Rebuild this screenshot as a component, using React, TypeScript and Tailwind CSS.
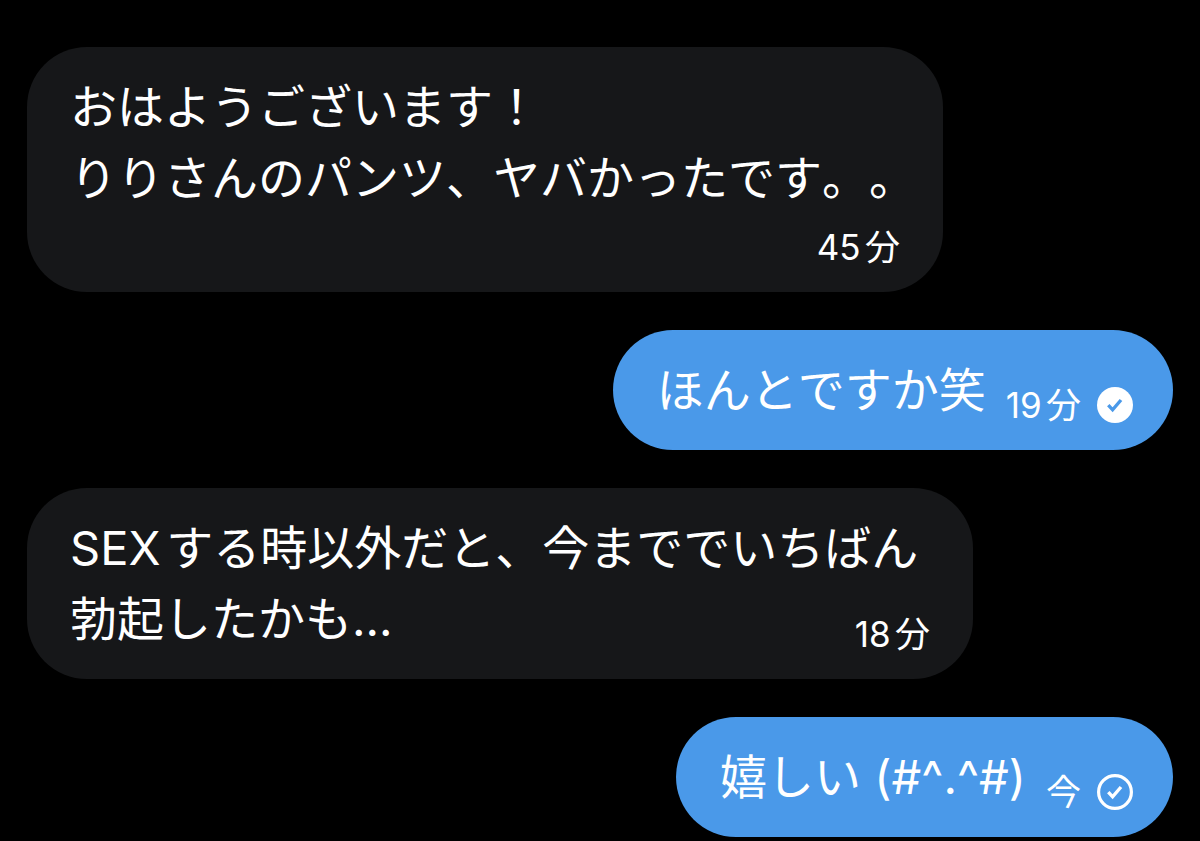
interface IMessage {
  id: number;
  lines: string[];
  time: string;
  mine?: boolean;
  status?: "read" | "sent";
  timeBelow?: boolean;
  width: string;
}

const messages: IMessage[] = [
  {
    id: 1,
    lines: ["おはようございます！", "りりさんのパンツ、ヤバかったです。。"],
    time: "45分",
    timeBelow: true,
    width: "w-[916px]",
  },
  {
    id: 2,
    lines: ["ほんとですか笑"],
    time: "19分",
    mine: true,
    status: "read",
    width: "w-fit",
  },
  {
    id: 3,
    lines: ["SEXする時以外だと、今まででいちばん", "勃起したかも..."],
    time: "18分",
    width: "w-[946px]",
  },
  {
    id: 4,
    lines: ["嬉しい (#^.^#)"],
    time: "今",
    mine: true,
    status: "sent",
    width: "w-fit",
  },
];

function StatusIcon({ status }: { status: "read" | "sent" }) {
  const read = status === "read";
  return (
    <svg viewBox="0 0 36 36" className="size-9 shrink-0" fill="none" aria-hidden="true">
      {read ? (
        <circle cx="18" cy="18" r="18" fill="white" />
      ) : (
        <circle cx="18" cy="18" r="16.4" stroke="white" strokeWidth="3.2" />
      )}
      <path
        d="M11.3 18.2 15.6 22.8 24 13"
        stroke={read ? "#4a99e9" : "white"}
        strokeWidth="3.4"
      />
    </svg>
  );
}

function Meta({ time, status }: { time: string; status?: "read" | "sent" }) {
  return (
    <div className="flex shrink-0 items-center gap-4">
      <time className="text-[35px] leading-10">{time}</time>
      {status && <StatusIcon status={status} />}
    </div>
  );
}

function Bubble({ message }: { message: IMessage }) {
  const { lines, time, mine, status, timeBelow, width } = message;
  const last = lines.length - 1;
  return (
    <li
      className={`flex max-w-full flex-col rounded-[60px] pt-6 pb-[25px] ${width} ${
        mine ? "self-end bg-[#4a99e9] pl-11 pr-10" : "self-start bg-[#161719] px-[43px]"
      }`}
    >
      {lines.map((line, index) => (
        <div key={index} className="flex items-end justify-between gap-5">
          <p className="whitespace-nowrap text-[47px] leading-[71px]">{line}</p>
          {index === last && !timeBelow && <Meta time={time} status={status} />}
        </div>
      ))}
      {timeBelow && (
        <div className="mt-3.5 flex justify-end">
          <Meta time={time} status={status} />
        </div>
      )}
    </li>
  );
}

export default function App() {
  return (
    <main className="min-h-screen bg-black px-[27px] pt-[47px] pb-1 text-white font-[Inter,'Noto_Sans_CJK_JP',sans-serif] [font-kerning:none] [text-autospace:normal] [text-spacing-trim:space-all]">
      <ul className="flex flex-col gap-[38px]">
        {messages.map((message) => (
          <Bubble key={message.id} message={message} />
        ))}
      </ul>
    </main>
  );
}
